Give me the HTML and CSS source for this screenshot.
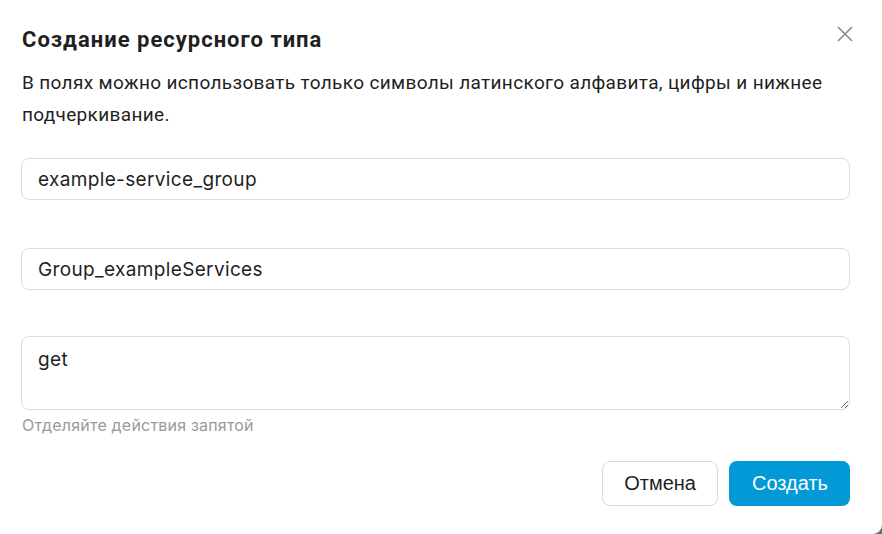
FILE: index.html
```html
<!DOCTYPE html>
<html lang="ru">
<head>
    <meta charset="UTF-8">
    <meta name="viewport" content="width=device-width, initial-scale=1.0">
    <link rel="stylesheet" href="styles.css">
    <title>Создание ресурсного типа</title>
</head>
<body>
    <div class="modal">
        <button class="close" aria-label="Закрыть">
            <svg width="16" height="16" viewBox="0 0 16 16">
                <path d="M1 1 L15 15 M15 1 L1 15" stroke="#8a8a8a" stroke-width="1.6" fill="none"/>
            </svg>
        </button>
        <h2 class="title">Создание ресурсного типа</h2>
        <p class="desc">В полях можно использовать только символы латинского алфавита, цифры и нижнее подчеркивание.</p>

        <div class="field">
            <input class="input" type="text" value="example-service_group">
        </div>
        <div class="field">
            <input class="input" type="text" value="Group_exampleServices">
        </div>
        <div class="field field-area">
            <textarea class="input area">get</textarea>
            <div class="hint">Отделяйте действия запятой</div>
        </div>

        <div class="actions">
            <button class="btn btn-cancel">Отмена</button>
            <button class="btn btn-primary">Создать</button>
        </div>
    </div>
</body>
</html>
```

FILE: styles.css
```css
html, body {
    margin: 0;
    padding: 0;
    height: 100%;
}

body {
    background-color: #6b6b6b;
    overflow: hidden;
}

.modal {
    position: relative;
    box-sizing: border-box;
    height: 534px;
    padding: 27px 32px 0 21px;
    background-color: #fff;
    border-bottom-right-radius: 9px;
    color: #1f1f1f;
}

.close {
    position: absolute;
    top: 26px;
    right: 29px;
    padding: 0;
    border: none;
    background: none;
    cursor: pointer;
    line-height: 0;
}

.title {
    margin: 0 0 0 1px;
    font-family: Roboto, "Liberation Sans", sans-serif;
    font-size: 22px;
    font-weight: 700;
    line-height: 26px;
    letter-spacing: 1px;
}

.desc {
    margin: 14px 0 0 1px;
    font-family: Roboto, "Liberation Sans", sans-serif;
    font-size: 19px;
    line-height: 32px;
    letter-spacing: 0.35px;
}

.field {
    margin-top: 27px;
}

.field + .field {
    margin-top: 48px;
}

.field + .field-area {
    margin-top: 46px;
}

.input {
    display: block;
    box-sizing: border-box;
    width: 100%;
    height: 42px;
    margin: 0;
    padding: 0 16px;
    border: 1px solid #dcdcdc;
    border-radius: 8px;
    font-family: Inter, "Open Sans", sans-serif;
    font-size: 19px;
    letter-spacing: 0.35px;
    color: #1f1f1f;
    background: #fff;
    outline: none;
}

.area {
    height: 74px;
    padding: 11px 16px;
    line-height: 24px;
    resize: vertical;
}

.hint {
    margin: 6px 0 0 1px;
    font-family: Inter, "Open Sans", sans-serif;
    font-size: 16px;
    line-height: 18px;
    letter-spacing: 0.2px;
    color: #9a9a9a;
}

.actions {
    display: flex;
    justify-content: flex-end;
    gap: 11px;
    margin-top: 27px;
}

.btn {
    height: 45px;
    border-radius: 8px;
    font-family: "Liberation Sans", Arial, sans-serif;
    font-size: 20px;
    cursor: pointer;
}

.btn-cancel {
    padding: 0 21px;
    border: 1px solid #dadada;
    background: #fff;
    color: #1f1f1f;
}

.btn-primary {
    padding: 0 22px 0 23px;
    border: none;
    background: #0299d6;
    color: #fff;
}
```
